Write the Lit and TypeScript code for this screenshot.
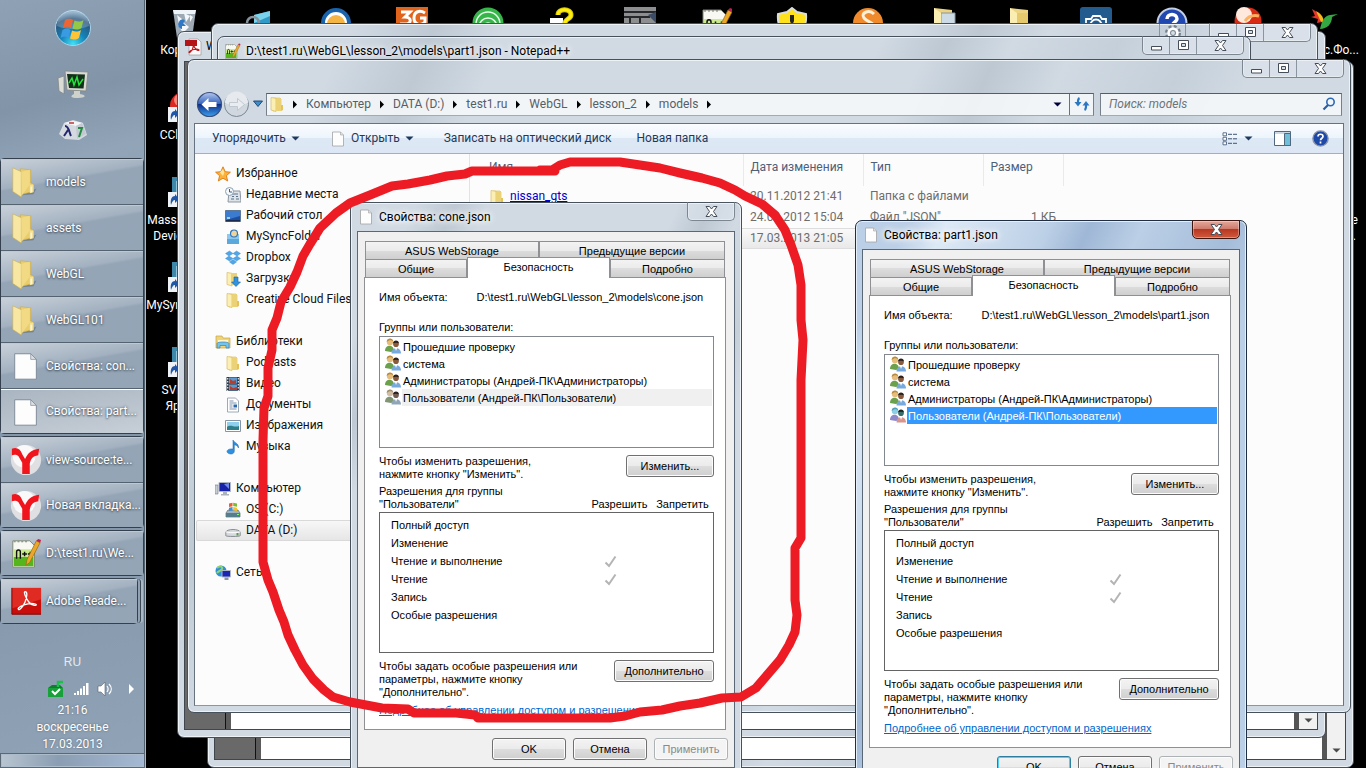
import { LitElement, html, css, svg, nothing, TemplateResult } from "lit";
import { customElement, property } from "lit/decorators.js";
import { classMap } from "lit/directives/class-map.js";

const base = css`
  * { box-sizing: border-box; }
  button, input { font: inherit; color: inherit; margin: 0; padding: 0; }
  button { background: none; border: 0; text-align: inherit; }
  a { color: inherit; text-decoration: none; }
  svg { display: block; flex: none; }
  h1, h2, p, ul, ol { margin: 0; padding: 0; font: inherit; list-style: none; }
`;

const shapes: Record<string, TemplateResult> = {
  folder: svg`<path d="M4 2h7l1 1v11l-8 1z" fill="#f3df8c" stroke="#d9b84d" stroke-width=".6"/><path d="M2 1.500l5 .8v13.200l-5-1.500z" fill="#fbefb4" stroke="#d3b44c" stroke-width=".6"/><path d="M7 3h5v12H7z" fill="#ecd276"/><path d="M12 9h2v5l-2 1z" fill="#e3c25a"/>`,
  bigFolder: svg`<path d="M12 31l13-1 3-6z" fill="#4c5a69" opacity=".45"/><path d="M11 3l11 1v14l3 1v8l-12 3z" fill="#e9cd6d" stroke="#c9a73d" stroke-width=".6"/><path d="M3 2l9 4v27l-9-6z" fill="#f7e7a3" stroke="#cfae4a" stroke-width=".6"/><path d="M12 6l9-2v16l-9 12z" fill="#f1da83"/><path d="M21 20h4v8l-4 1z" fill="#f3e29b"/><path d="M22.500 22v6" stroke="#fff"/>`,
  page: svg`<path d="M2.500 1h8l3 3v11h-11z" fill="#fdfdfd" stroke="#a2a2a2" stroke-width=".8"/><path d="M10.500 1v3h3" fill="#ddd" stroke="#a2a2a2" stroke-width=".6"/>`,
  bigPage: svg`<path d="M5 4h17l6 6v21H5z" fill="#fdfdfd" stroke="#7c8896"/><path d="M22 4v6h6z" fill="#dcdfe3" stroke="#7c8896" stroke-width=".7"/>`,
  yandex: svg`<circle cx="17" cy="17" r="16" fill="#e0e0e3"/><circle cx="15" cy="13" r="12" fill="#fff" opacity=".8"/><path d="M2 5c5-2 9 0 11 6l3 5c3-6 6-10 15-11l-1 7c-6 1-8 4-9 9v11h-8V20L9 13c-2-2-5-2-7-1z" fill="#f0151c"/>`,
  npp: svg`<path d="M3 3h18l5 5v23H3z" fill="#f8f9f2" stroke="#7b8471"/><path d="M4 20h21v10H4z" fill="#55b61b"/><path d="M4 12h21v8H4z" fill="#c9ea8f"/><path d="M4 4h2M8 4h2M12 4h2M16 4h2" stroke="#777"/><path d="M7 22v-7c0-3 4-3 4 0v7M13 17h5M15.500 14.500v5M19 17h5M21.500 14.500v5" fill="none" stroke="#111" stroke-width="1.500"/><path d="M28 3l4 2-11 21-4 3 1-6z" fill="#eaa72a" stroke="#9a6511" stroke-width=".7"/><path d="M28 3l4 2 1-3-3-1z" fill="#b25"/>`,
  adobe: svg`<path d="M2 2h31v28H2z" fill="#c90d0b"/><path d="M2 2h31v12L2 24z" fill="#e02b22"/><path d="M2 2v28h31" fill="none" stroke="#7c0504"/><path d="M16 6c3 0 2 6 0 11-2 5-6 9-7 8-2-2 5-5 10-6s9 0 9 1-5 1-8-3-6-11-4-11z" fill="none" stroke="#fff" stroke-width="1.400"/>`,
  pdf: svg`<path d="M5 1h9l3 3v13H5z" fill="#fafafa" stroke="#999" stroke-width=".7"/><path d="M1 2h12v6H1z" fill="#b31417"/><path d="M9 6c1 0 0 4-1 6-2 3-3 3-3 2 1-2 8-4 10-2 0 1-3 0-4-2S8 6 9 6z" fill="none" stroke="#c01519" stroke-width="1.200"/>`,
  star: svg`<path d="M8 .8l2.200 4.900 5.200.5-4 3.500 1.300 5.300L8 12.200 3.300 15l1.300-5.300-4-3.500 5.200-.5z" fill="#fbb13a" stroke="#d97b16" stroke-width=".9"/><path d="M8 3l1.300 3.500L8 10 5 6.500z" fill="#ffe49a"/>`,
  recent: svg`<path d="M4 4h11l1 11H3z" fill="#dde3e8" stroke="#8b97a3"/><path d="M7 7h6M7 9.500h2M11 9.500h2M6 12h3M11 12h3" stroke="#5b7288"/><circle cx="4.500" cy="4.500" r="4" fill="#f7f9fb" stroke="#8aa0b4"/><path d="M4.500 2v3H7" stroke="#35618b" fill="none"/>`,
  desktop: svg`<path d="M.5 2.500h15v11H.5z" fill="#1c4fa3" stroke="#5d7897"/><path d="M1 3h14v5L1 12z" fill="#3b7bd0"/><path d="M1 12h14v1.500H1z" fill="#1b2c4a"/><path d="M2 9h3v2H2z" fill="#9fd3f5"/>`,
  sync: svg`<path d="M2 5h12v10H2z" fill="#5aa8dc"/><path d="M2 5h12v5H2z" fill="#8cc8ee"/><circle cx="9" cy="4.500" r="3.500" fill="#f0d49a" stroke="#2e77bd" stroke-width="1.200"/>`,
  dropbox: svg`<path d="M4.500 1L8 3.500 4 6 .5 3.500zM11.500 1L8 3.500 12 6l3.500-2.500zM.5 8.500L4 6l4 2.500L4.500 11zM15.500 8.500L12 6 8 8.500l3.500 2.500zM4.500 12L8 9.500l3.500 2.500L8 14.500z" fill="#4ea7ea" stroke="#3b86c4" stroke-width=".4"/>`,
  download: svg`<path d="M2 1.500l5 .8V15l-5-1.500z" fill="#fbefb4" stroke="#d3b44c" stroke-width=".6"/><path d="M6 2h6v12H6z" fill="#ecd276"/><path d="M9 6h4v5h2.500L11 15.500 6.500 11H9z" fill="#2f93de" stroke="#1a62a8" stroke-width=".6"/>`,
  library: svg`<path d="M1 2h6l1 2h7v10H1z" fill="#efd47a" stroke="#c6a343" stroke-width=".7"/><path d="M3 6h10v3H3z" fill="#fff6cf"/><path d="M2 14V9.500c0-2 12-2 12 0V14h-3v-2.500H5V14z" fill="#73c4ea" stroke="#3a83b4" stroke-width=".7"/>`,
  video: svg`<path d="M1.500 1h13v14h-13z" fill="#2c3a48"/><path d="M4 1.500h8v6H4zM4 8.500h8v6H4z" fill="#5b9ad0"/><path d="M5 3l3 2 3-1v3H5zM5 10l3 2 4-1v3H5z" fill="#b33e2f"/><path d="M2.700 2v13M13.300 2v13" stroke="#e8edf2" stroke-width="1.200" stroke-dasharray="1.500 1.500"/>`,
  doc: svg`<path d="M2.500 1h8l3 3v11h-11z" fill="#fff" stroke="#8595a5" stroke-width=".8"/><path d="M4.500 4h4M4.500 6h7M4.500 8h3M4.500 10h3M4.500 12h7" stroke="#7c93aa"/><path d="M8.500 7.500h3.500v3H8.500z" fill="#2d68a8"/>`,
  image: svg`<path d="M.5 2.500h15v11H.5z" fill="#fff" stroke="#8595a5"/><path d="M2 4h12v8H2z" fill="#8fd0ee"/><path d="M2 9c4-3 7 1 12-1v4H2z" fill="#2f7f8a"/>`,
  music: svg`<path d="M8 1c1 3 6 3 5.500 8-1-2.500-3-3-4.200-3.200V12c0 2-1.500 3-3.300 3S2 14 2 12.500 4 9.500 8 10z" fill="#2f8fe0" stroke="#1560a8" stroke-width=".5"/>`,
  computer: svg`<path d="M0 4h3v9H0z" fill="#c6cdd4" stroke="#6f7a85" stroke-width=".6"/><path d="M4 1.500h11.500v9H4z" fill="#1722a8" stroke="#b0b8c1"/><path d="M9 3l5-1v6z" fill="#6f86ea"/><path d="M8 11h4v2h2v1.500H6V13h2z" fill="#aab3bc"/>`,
  osdrive: svg`<path d="M1 11l2-3h10l2 3v4H1z" fill="#9fb4c0" stroke="#5d6c76" stroke-width=".7"/><path d="M1 11h14v4H1z" fill="#557d8c"/><path d="M12 12.500h2" stroke="#7dff6a"/><path d="M4 1.500l3.500-.7v3.500L4 5z" fill="#e9602c"/><path d="M8.200.7L12 1.500v3.300L8.200 4z" fill="#7dba38"/><path d="M4 5.700l3.500-.7v3.500L4 9z" fill="#3b8fd6"/><path d="M8.200 5l3.800.7V9l-3.800-.7z" fill="#f6c22f"/>`,
  drive: svg`<path d="M.8 9.500c0-4 14.400-4 14.400 0v3.200c0 1-14.400 1-14.400 0z" fill="#d7dadd" stroke="#6f777e" stroke-width=".8"/><path d="M1 8.800c2 1.200 12 1.200 14 0" stroke="#fff" fill="none"/><path d="M11.500 10v2.500h2V10z" fill="#5a9a4b"/>`,
  network: svg`<circle cx="6" cy="6" r="5.500" fill="#2e8fd8"/><path d="M2 3c3-3 6-1 5 1S3 6 2 8M8 8c2-1 3 0 2 2" stroke="#8fd46e" stroke-width="2" fill="none"/><path d="M7 5.500h8.500v6.500H7z" fill="#1a27b5" stroke="#aeb8c4"/><path d="M9.500 12.500h4v2.500h-4z" fill="#8d98a5"/>`,
  users: svg`<circle cx="5" cy="4" r="3.200" fill="#e6bd7d"/><path d="M1.800 4C1 0 8 -1 8.200 3.500 6 1.500 4 2 1.800 4z" fill="#b88c3e"/><path d="M0 13c0-7 9-7 9 0l-3 1z" fill="#6ba04d"/><circle cx="11" cy="6.200" r="2.800" fill="#8a5a3c"/><path d="M8 5.500c0-4 6-4 6 0-2-1-4-1-6 0z" fill="#2c2019"/><path d="M6.500 15.500c0-7 9.500-7 9.500 0z" fill="#78a9dc"/><path d="M10 10l1 3 1.200-3z" fill="#fff"/>`,
  bin: svg`<path d="M5 3h23l-4 28H9z" fill="#b9c7d4" opacity=".85"/><path d="M5 3h23l-1 4H6z" fill="#eef3f7"/><path d="M9 8l5 4-3 5zM16 6l6 3-4 6zM22 8l3 2-3 5zM10 18l6-2 5 4-6 6z" fill="#f4f8fb"/><path d="M11 15c1-3 5-3 6-1l-2 2 3 3h-4v3c-3 0-5-4-3-7z" fill="#2f78c8"/>`,
  monitor: svg`<path d="M10 8l16-4v18L10 24z" fill="#2f9ac7"/><path d="M10 8l16-4v5l-16 7z" fill="#79d3ec"/><circle cx="9" cy="16" r="6" fill="none" stroke="#88929c" stroke-width="2.500"/>`,
  ring: svg`<circle cx="16" cy="16" r="13" fill="#fff" stroke="#1a63ad" stroke-width="4"/><circle cx="16" cy="17" r="9" fill="#f4b544"/><path d="M2 14l-2 4h6z" fill="#1a63ad"/>`,
  three: svg`<path d="M0 0h32v32H0z" fill="#e0641c"/><path d="M5 5h9l-5 5c7 0 7 7 0 7H4M29 6c-5-3-11-2-11 5s7 8 11 4v-4h-5" fill="none" stroke="#fff" stroke-width="3"/>`,
  wave: svg`<circle cx="16" cy="16" r="15.500" fill="#38b54a"/><path d="M7 20a9 9 0 0118 0M4 17a12 12 0 0124 0M11 21a5 5 0 0110 0" fill="none" stroke="#e4ffe8" stroke-width="1.500"/>`,
  question: svg`<path d="M2 11h13v8H2z" fill="#fff"/><path d="M10 8c0-7 13-7 13 0 0 4-6 4-6 8" fill="none" stroke="#d8c800" stroke-width="5"/><path d="M10 8c0-7 13-7 13 0 0 4-6 4-6 8" fill="none" stroke="#ffee11" stroke-width="3"/>`,
  photo: svg`<path d="M0 0h32v32H0z" fill="#8c8e90"/><path d="M0 5h32M0 10h26M6 10v10M16 10v10" stroke="#26282b" stroke-width="2"/><path d="M24 8l8 8V5z" fill="#3d4d66"/>`,
  shield: svg`<path d="M16 1l5 4 9 2c1 12-4 20-14 24C6 27 1 19 2 7l9-2z" fill="#ffe11c" stroke="#d9dde2" stroke-width="2"/><path d="M14 8h4v6l-2 5-2-5z" fill="#222"/>`,
  scratch: svg`<circle cx="16" cy="16" r="15" fill="#f08a2c"/><path d="M22 7c-5-5-14-1-10 4s12 4 8 10" fill="none" stroke="#fff1d8" stroke-width="3"/>`,
  deskFolder: svg`<path d="M6 1l18 2v22H6z" fill="#ecd482"/><path d="M6 1l7 5v25l-7-6z" fill="#fbeeb2"/><path d="M13 6h11v18H13z" fill="#e5c96c"/>`,
  docsFolder: svg`<path d="M6 1l18 2v22H6z" fill="#ecd482"/><path d="M13 6h14v18H13z" fill="#cddbe6" stroke="#8796a5"/><path d="M6 1l7 5v25l-7-6z" fill="#fbeeb2"/>`,
  camera: svg`<rect width="32" height="32" rx="3" fill="#245b8f"/><path d="M6 12h5l2-3h7l2 3h4v14H6z" fill="none" stroke="#fff" stroke-width="1.800"/><circle cx="16" cy="18" r="5.500" fill="none" stroke="#fff" stroke-width="2"/>`,
  help: svg`<circle cx="16" cy="16" r="14.500" fill="#2048b0" stroke="#c3cfe2" stroke-width="2"/><path d="M11 12c0-6 10-6 10 0 0 3-5 3-5 8M16 23v3" fill="none" stroke="#fff" stroke-width="3.500"/>`,
  ball: svg`<circle cx="16" cy="14" r="13.500" fill="#d92a14"/><circle cx="12" cy="8" r="8" fill="#ffe9dc"/><path d="M13 14c4-6 9-6 14-5" stroke="#ffb060" stroke-width="3" fill="none"/>`,
  bird: svg`<path d="M4 2c6 3 9 7 10 13l-5 1 1-4-7-2 4-1z" fill="#e8352b"/><path d="M8 4c6 3 8 7 8 14l-4-5z" fill="#f7b71d"/><path d="M12 22c2-8 4-13 10-14l8-1-6 3c0 7-5 12-12 12z" fill="#35a844"/>`,
  redball: svg`<circle cx="16" cy="14" r="14" fill="#dc2820"/><circle cx="12" cy="8" r="6" fill="#f4867c"/><path d="M0 15h12v15H0z" fill="#eef2f6"/><path d="M3 28c-1-6 1-9 4-9v-2l4 5-4 4v-3c-2 0-3 2-4 5z" fill="#1f56a8"/>`,
  shortcut: svg`<path d="M4 0h24v20H4z" fill="#3f87a8"/><path d="M8 4h18v12H8z" fill="#8fc4dc"/><path d="M0 15h12v15H0z" fill="#eef2f6"/><path d="M3 28c-1-6 1-9 4-9v-2l4 5-4 4v-3c-2 0-3 2-4 5z" fill="#1f56a8"/>`,
};

const icon = (name: string, size: number, box = size) =>
  html`<svg width=${size} height=${size} viewBox="0 0 ${box} ${box}" aria-hidden="true">${shapes[name]}</svg>`;

const arrow = (dir: "down" | "right", color: string) =>
  html`<svg width="9" height="9" viewBox="0 0 9 9" aria-hidden="true"><path d=${dir === "down" ? "M0.500 2.500h8l-4 4z" : "M3 0.500v8l4-4z"} fill=${color} /></svg>`;

const glyphMin = html`<svg width="13" height="13" viewBox="0 0 13 13"><path d="M1.500 7.500h10v3.500h-10z" fill="#fff" stroke="#454e58"/></svg>`;
const glyphMax = html`<svg width="13" height="13" viewBox="0 0 13 13"><path d="M1.500 1.500h10v9h-10z" fill="#fff" stroke="#454e58"/><path d="M4.500 4.500h4v3h-4z" fill="#d5dde5" stroke="#454e58"/></svg>`;
const glyphClose = html`<svg width="13" height="13" viewBox="0 0 13 13"><path d="M1 1.500h3.500l2 2.500 2-2.500H12L8.500 6.500 12 11.500H8.500l-2-2.500-2 2.500H1l3.500-5z" fill="#fff" stroke="#454e58"/></svg>`;

const captionCss = css`
  .caption { position: absolute; top: -1px; right: 6px; display: flex; height: 19px; border: 1px solid #7d8791; border-top-color: #4b5560; border-radius: 0 0 5px 5px; background: rgba(222, 229, 236, 0.6); overflow: hidden; box-shadow: inset 0 0 0 1px rgba(255, 255, 255, 0.35); }
  .caption button { display: grid; place-items: center; width: 27px; border-right: 1px solid #8b959f; }
  .caption .x { width: 46px; border-right: 0; }
  .glass { border: 1px solid #47515c; border-radius: 7px; box-shadow: inset 0 0 0 1px #edf2f6;
    background: linear-gradient(115deg, transparent 10%, rgba(150, 165, 180, .32) 16%, transparent 21%, transparent 50%, rgba(150, 165, 180, .34) 55%, transparent 60%, rgba(150, 165, 180, .2) 68%, transparent 73%), #d1dae3; }
`;

const caption = () => html`<div class="caption">
  <button aria-label="Свернуть">${glyphMin}</button>
  <button aria-label="Развернуть">${glyphMax}</button>
  <button class="x" aria-label="Закрыть">${glyphClose}</button>
</div>`;

@customElement("task-bar")
class TaskBar extends LitElement {
  static styles = [base, css`
    :host { display: flex; flex-direction: column; width: 146px; height: 100%; color: #fff; font-size: 12px; line-height: 17px;
      border-right: 1px solid #a9bacb; box-shadow: inset -1px 0 #52616f;
      background: linear-gradient(165deg, #8fa1b4 0, #8294a8 14%, #92a4b7 22%, #8294a7 60%, #90a3b7 100%); }
    .launch { display: flex; flex-direction: column; align-items: center; gap: 15px; padding-top: 9px; height: 158px; }
    .start { margin-bottom: 6px; }
    .groups { display: flex; flex-direction: column; gap: 2px; }
    .group { border: 1px solid #34404d; border-radius: 4px; margin-right: 1px; box-shadow: inset 0 0 0 1px #c0ccd8; }
    .stacked { width: 138px; box-shadow: inset 0 0 0 1px #c0ccd8, 3px 0 0 -1px #8fa1b3, 4px 0 0 -1px #3d4955, 6px 0 0 -1px #a9b8c7; }
    .task { display: flex; align-items: center; gap: 4px; width: 100%; height: 46px; padding: 0 4px 0 9px;
      border-bottom: 1px solid #55626f; border-top: 1px solid #bdc9d5; text-shadow: 0 0 3px #4b5967, 0 1px 2px #4b5967;
      background: linear-gradient(170deg, rgba(255,255,255,.5) 0, rgba(255,255,255,.16) 42%, rgba(255,255,255,.03) 46%), #91a2b4; }
    .task:last-child { border-bottom: 0; height: 44px; }
    .task.active { background: linear-gradient(170deg, #a9b5c1, #c7cfd7); border-color: #fff; }
    .task span { white-space: nowrap; }
    .tray { margin-top: auto; display: flex; flex-direction: column; align-items: center; }
    .lang { color: #e6ebef; font-family: "Liberation Sans", sans-serif; }
    .status { display: flex; align-items: center; gap: 8px; padding: 8px 0 4px 45px; height: 31px; }
    .clock { display: flex; flex-direction: column; align-items: center; text-shadow: 0 0 2px #55626f; }
    .show { width: 145px; height: 15px; border: 1px solid #5b6977; box-shadow: inset 0 0 0 1px #adbccb; background: linear-gradient(90deg, #b9c5d1, #8a9db2 40%, #a5b9d4); }
  `];
  private groups = [
    [["bigFolder", "models"], ["bigFolder", "assets"], ["bigFolder", "WebGL"], ["bigFolder", "WebGL101"], ["bigPage", "Свойства: con..."], ["bigPage", "Свойства: part..."]],
    [["yandex", "view-source:te..."], ["yandex", "Новая вкладка..."]],
    [["npp", "D:\\test1.ru\\We..."]],
    [["adobe", "Adobe Reade..."]],
  ];
  render() {
    return html`
      <div class="launch">
        <button class="start" aria-label="Пуск"><svg width="38" height="38" viewBox="0 0 38 38">
          <defs><radialGradient id="orb" cx=".5" cy=".95" r=".9"><stop offset="0" stop-color="#3fe0f5"/><stop offset=".4" stop-color="#1583b9"/><stop offset=".8" stop-color="#2a5479"/><stop offset="1" stop-color="#7ea3c2"/></radialGradient></defs>
          <circle cx="19" cy="19" r="17.500" fill="url(#orb)" stroke="#a9d3e8"/><path d="M3 17a16 16 0 0132 0c-8 4-24 4-32 0z" fill="#fff" opacity=".22"/>
          <path d="M11 11c3-2 6-1 8 0l-2 8c-2-1.500-5-2-8 0z" fill="#ef6433"/><path d="M20.500 11.500c3 1.500 6 1.500 9-.5l-2 8c-3 2-6 2-9 .5z" fill="#93c947"/>
          <path d="M8.500 21c3-2 6-1.500 8 0l-2 8c-2-1.500-5-2-8 0z" fill="#3a9be4"/><path d="M18 21.500c3 1.500 6 1.500 9-.5l-2 8c-3 2-6 2-9 .5z" fill="#fcc436"/></svg></button>
        <button aria-label="Диспетчер задач"><svg width="32" height="32" viewBox="0 0 32 32">
          <path d="M1 10l6-2v18l-5-3z" fill="#dcdcd6" stroke="#80837f" stroke-width=".7"/><path d="M8 3l23 1-2 19-19-1z" fill="#d9dad4" stroke="#85887f" stroke-width=".8"/>
          <path d="M10 6l18 .5-1.500 14L12 20z" fill="#12301a"/><path d="M12 15l3-5 2 7 3-8 2 8 4-6" fill="none" stroke="#25e33a" stroke-width="1.500"/><path d="M17 23h6v3c7 1 6 4-2 4s-8-2-4-4z" fill="#cfd1cb"/></svg></button>
        <button aria-label="Лямбда"><svg width="32" height="32" viewBox="0 0 32 32">
          <path d="M7 8l9-3 10 3 4 12-8 5-14-1-6-5z" fill="#d5dae0"/><path d="M7 8l9-2 10 2-7 3z" fill="#f3f5f7"/><path d="M19 11l1 13 9-5-4-11z" fill="#c2c9d1"/>
          <path d="M12 7h5v2h-5z" fill="#c66"/><path d="M8 11c4 0 4 6 6 10M11 15l-4 6" stroke="#23266e" stroke-width="2" fill="none"/><path d="M21 13h4l-3 9" stroke="#268a44" stroke-width="2" fill="none"/></svg></button>
      </div>
      <nav class="groups">
        ${this.groups.map((g, i) => html`<div class=${classMap({ group: true, stacked: i === 3 })}>
          ${g.map(([ic, label], j) => html`<button class=${classMap({ task: true, active: i === 0 && j === 5 })}>${icon(ic, 32, 34)}<span>${label}</span></button>`)}
        </div>`)}
      </nav>
      <div class="tray">
        <button class="lang">RU</button>
        <div class="status">
          <svg width="18" height="18" viewBox="0 0 18 18"><path d="M1 8h15v9H1z" fill="#18a03a"/><path d="M1 8l4-3h8l3 3z" fill="#0f7d2b"/><path d="M11 7V2h5" stroke="#1ac04a" stroke-width="2.500" fill="none"/><path d="M5 11l3 3 5-5" stroke="#fff" stroke-width="2" fill="none"/></svg>
          <svg width="16" height="16" viewBox="0 0 16 16"><path d="M1 12h2v2H1zM4 10h2v4H4zM7 7.500h2V14H7zM10 5h2v9h-2zM13 2h2.500v12H13z" fill="#fff"/></svg>
          <svg width="16" height="16" viewBox="0 0 16 16"><path d="M1 5h3l4-4v14l-4-4H1z" fill="#fff" stroke="#55626f" stroke-width=".6"/><path d="M10 5c1.500 2 1.500 4 0 6M12 3c3 3 3 7 0 10" stroke="#fff" fill="none" stroke-width="1.200"/></svg>
          <svg width="22" height="12" viewBox="4 0 22 12"><path d="M12 1v10l5-5z" fill="#fff"/></svg>
        </div>
        <div class="clock"><span>21:16</span><span>воскресенье</span><span>17.03.2013</span></div>
        <button class="show" aria-label="Свернуть все окна"></button>
      </div>`;
  }
}

@customElement("reader-window")
class ReaderWindow extends LitElement {
  static styles = [base, captionCss, css`
    :host { display: block; }
    .glass { position: relative; display: flex; flex-direction: column; height: 100%; padding: 0 7px 7px 6px; }
    .title { display: flex; align-items: center; gap: 4px; height: 29px; color: #000; font-size: 12px; }
    .body { flex: 1; display: flex; border: 1px solid #3f464d; background: #fff; }
    .side { width: 41px; background: #696969; border-right: 1px solid #111; }
    .split { width: 5px; background: #5b5b5b; }
    .doc { flex: 1; border-right: 5px solid #555; }
    .bar { width: 18px; display: flex; align-items: flex-end; justify-content: center; padding-bottom: 4px; background: #f1f1f1; }
  `];
  render() {
    return html`<section class="glass">
      <div class="title">${icon("pdf", 18)}<span>WebGL</span></div>
      <div class="body"><div class="side"></div><div class="split"></div><div class="doc"></div><div class="bar">${arrow("down", "#4a4a4a")}</div></div>
    </section>`;
  }
}

@customElement("title-window")
class TitleWindow extends LitElement {
  @property() heading = "";
  @property({ type: Boolean }) options = false;
  static styles = [base, captionCss, css`
    :host { display: block; }
    .glass { position: relative; height: 100%; padding: 4px 6px; }
    .title { display: flex; align-items: center; gap: 5px; height: 20px; font-size: 12px; text-shadow: 0 0 5px #fff, 0 0 9px #fff; }
    .opts { position: absolute; top: 0; right: 131px; width: 27px; display: grid; justify-content: center; border: solid #8b959f; border-width: 0 1px; }
  `];
  render() {
    return html`<section class="glass">
      ${this.heading ? html`<h2 class="title">${icon("npp", 17, 34)}<span>${this.heading}</span></h2>` : nothing}
      ${this.options ? html`<button class="opts" aria-label="Параметры"><svg width="18" height="18" viewBox="0 0 18 18"><circle cx="9" cy="9" r="6" fill="none" stroke="#77818b" stroke-width="4" stroke-dasharray="2.600 2.100"/><circle cx="9" cy="9" r="4.500" fill="#d5dde5" stroke="#fff" stroke-width="2.500"/><circle cx="9" cy="9" r="2.500" fill="none" stroke="#77818b"/></svg></button>` : nothing}
      ${caption()}
    </section>`;
  }
}

@customElement("explorer-window")
class ExplorerWindow extends LitElement {
  static styles = [base, captionCss, css`
    :host { display: block; font-size: 12px; line-height: 17px; }
    .glass { position: relative; display: flex; flex-direction: column; height: 100%; padding: 0 7px 6px; }
    .nav { display: flex; align-items: center; height: 63px; padding: 32px 1px 7px; }
    .travel { display: flex; align-items: center; width: 70px; }
    .travel .drop { padding-left: 3px; }
    .field { display: flex; align-items: center; height: 23px; border: 1px solid #76808b; border-top-color: #545d67; border-bottom-color: #a2abb5; background: rgba(248, 250, 252, .84); color: #565e68; }
    .address { flex: 1; margin-right: 6px; padding-left: 2px; }
    .address ol { display: flex; flex: 1; padding-left: 5px; gap: 7px; }
    .address li { display: flex; align-items: center; gap: 6px; }
    .address > button { display: grid; place-items: center; width: 24px; height: 21px; }
    .address .reload { border-left: 1px solid #69727c; }
    .search { width: 242px; padding: 0 5px 0 8px; }
    .search input { flex: 1; min-width: 0; border: 0; background: none; outline: 0; }
    .search input::placeholder { color: #6d737a; font-style: italic; opacity: 1; }
    .client { flex: 1; display: flex; flex-direction: column; border: 1px solid #66727f; border-bottom-color: #8b96a1; background: #fcfcfc; min-height: 0; margin: 0 -1px; }
    .tools { display: flex; align-items: center; height: 30px; padding: 0 14px 0 17px; color: #1e395b; border-bottom: 1px solid #a0afc3; background: linear-gradient(#fbfdff, #ecf4fc 48%, #dde8f5 50%, #dce6f4); }
    .tools button { display: flex; align-items: center; gap: 5px; }
    .open { margin: 0 30px; }
    .burn { margin-right: 25px; }
    .right { display: flex; align-items: center; gap: 21px; margin-left: auto; }
    .split { flex: 1; display: flex; }
    .tree { width: 275px; border-right: 1px solid #d9e5f3; padding-top: 9px; }
    .tree ul { margin-bottom: 21px; }
    .tree a { display: flex; align-items: center; gap: 5px; height: 21px; padding-left: 30px; color: #111; }
    .tree .root { padding-left: 20px; }
    .tree .sel { background: linear-gradient(#f8f8f8, #e5e5e5); box-shadow: inset 0 0 0 1px #d9d9d9; border-radius: 2px; margin-left: 1px; padding-left: 29px; }
    table { border-collapse: collapse; table-layout: fixed; width: 593px; align-self: flex-start; color: #6d6d6d; }
    th, td { padding: 0 0 0 7px; font-weight: 400; text-align: left; white-space: nowrap; }
    th { height: 32px; color: #4c607a; border-right: 1px solid #e3ebf4; padding-bottom: 6px; }
    th:nth-child(1), td:nth-child(1) { width: 273px; padding-left: 19px; }
    td:nth-child(1) { color: #00c; }
    th:nth-child(2), th:nth-child(3) { width: 120px; }
    th:nth-child(4) { width: 80px; }
    td:nth-child(4) { text-align: right; padding-right: 7px; }
    td { height: 21px; }
    td a { display: flex; align-items: center; gap: 5px; text-decoration: underline; }
    .current td { background: linear-gradient(#fafafa, #e8e8e8); box-shadow: inset 0 1px #ddd, inset 0 -1px #ddd; }
  `];
  private crumbs = ["Компьютер", "DATA (D:)", "test1.ru", "WebGL", "lesson_2", "models"];
  private tree: [string, string, [string, string][]][] = [
    ["star", "Избранное", [["recent", "Недавние места"], ["desktop", "Рабочий стол"], ["sync", "MySyncFolder"], ["dropbox", "Dropbox"], ["download", "Загрузки"], ["folder", "Creative Cloud Files"]]],
    ["library", "Библиотеки", [["folder", "Podcasts"], ["video", "Видео"], ["doc", "Документы"], ["image", "Изображения"], ["music", "Музыка"]]],
    ["computer", "Компьютер", [["osdrive", "OS (C:)"], ["drive", "DATA (D:)"]]],
    ["network", "Сеть", []],
  ];
  render() {
    return html`<section class="glass">
      ${caption()}
      <div class="nav">
        <div class="travel">
          <button aria-label="Назад"><svg width="27" height="27" viewBox="0 0 27 27">
            <defs><linearGradient id="bk" x2="0" y2="1"><stop offset="0" stop-color="#b5c8ee"/><stop offset=".48" stop-color="#3462bd"/><stop offset=".5" stop-color="#0d2f8c"/><stop offset="1" stop-color="#3aa0ee"/></linearGradient></defs>
            <circle cx="13.500" cy="13.500" r="12" fill="url(#bk)" stroke="#3a4f7c" stroke-width="1.200"/><path d="M5.500 13.500l7-6.500v4h8v5h-8v4z" fill="#fff"/></svg></button>
          <button aria-label="Вперед"><svg width="27" height="27" viewBox="0 0 27 27">
            <circle cx="13.500" cy="13.500" r="12" fill="#d0d7de" stroke="#7c8792"/><path d="M2 12a11.500 11.500 0 0123 0c-8 3-15 3-23 0z" fill="#e6eaee"/><path d="M21.500 13.500l-7-6v4h-8v4h8v4z" fill="#e9edf1" stroke="#b7c0c9" stroke-width=".8"/></svg></button>
          <button class="drop" aria-label="Последние страницы"><svg width="10" height="8" viewBox="0 0 10 8"><path d="M.5 1h9L5 6.500z" fill="#3f8ecb" stroke="#153f6b" stroke-width=".9"/></svg></button>
        </div>
        <div class="field address">
          ${icon("folder", 16)}
          <ol><li>${arrow("right", "#000")}</li>${this.crumbs.map((c) => html`<li><a href="#">${c}</a>${arrow("right", "#000")}</li>`)}</ol>
          <button aria-label="Журнал адресов">${arrow("down", "#00003c")}</button>
          <button class="reload" aria-label="Обновить"><svg width="16" height="16" viewBox="0 0 16 16"><path d="M5.500 2C3.500 3 4 5 4 8" stroke="#2a78c4" stroke-width="2.200" fill="none"/><path d="M.5 6h7L4 10.500z" fill="#2a78c4"/><path d="M10.500 14c2-1 1.500-3 1.500-6" stroke="#2a78c4" stroke-width="2.200" fill="none"/><path d="M8.500 9.500h7L12 5z" fill="#2a78c4"/></svg></button>
        </div>
        <div class="field search">
          <input aria-label="Поиск" placeholder="Поиск: models" />
          <svg width="14" height="14" viewBox="0 0 14 14"><circle cx="8.500" cy="5" r="3.700" fill="none" stroke="#2a69b5" stroke-width="1.600"/><path d="M6 8l-4.500 4.500" stroke="#2a5ca0" stroke-width="2.200"/></svg>
        </div>
      </div>
      <div class="client">
        <div class="tools">
          <button>Упорядочить ${arrow("down", "#1e395b")}</button>
          <button class="open">${icon("page", 16)}Открыть ${arrow("down", "#1e395b")}</button>
          <button class="burn">Записать на оптический диск</button>
          <button>Новая папка</button>
          <div class="right">
            <button aria-label="Вид"><svg width="17" height="14" viewBox="0 0 17 14"><path d="M1 .8h3.500v3H1zM1 5.300h3.500v3H1zM1 9.800h3.500v3H1z" fill="#fff" stroke="#4f6380" stroke-width=".9"/><path d="M6 2.300h10M6 6.800h10M6 11.300h10" stroke="#3f5572" stroke-dasharray="4 1"/></svg>${arrow("down", "#1e395b")}</button>
            <button aria-label="Область просмотра"><svg width="17" height="15" viewBox="0 0 17 15"><path d="M.5.5h16v14H.5z" fill="#fff" stroke="#51667f"/><path d="M1 1h15v2H1z" fill="#ccd8e4"/><path d="M10.500 2.500h6v12h-6z" fill="#6fbfd9" stroke="#51667f"/></svg></button>
            <button aria-label="Справка"><svg width="17" height="17" viewBox="0 0 17 17"><circle cx="8.500" cy="8.500" r="7.600" fill="#1e49a8" stroke="#8993a8" stroke-width="1.400"/><path d="M6 6.500c0-3 5-3 5 0 0 1.800-2.500 1.600-2.500 3.700M8.500 11.500v2" stroke="#fff" stroke-width="1.700" fill="none"/></svg></button>
          </div>
        </div>
        <div class="split">
          <nav class="tree">${this.tree.map(([ic, name, kids]) => html`<ul>
            <li><a class="root" href="#">${icon(ic, 16)}${name}</a></li>
            ${kids.map(([k, n]) => html`<li><a href="#" class=${classMap({ sel: n === "DATA (D:)" })}>${icon(k, 16)}${n}</a></li>`)}
          </ul>`)}</nav>
          <table>
            <thead><tr><th>Имя</th><th>Дата изменения</th><th>Тип</th><th>Размер</th></tr></thead>
            <tbody>
              <tr><td><a href="#">${icon("folder", 16)}nissan_gts</a></td><td>20.11.2012 21:41</td><td>Папка с файлами</td><td></td></tr>
              <tr><td></td><td>24.09.2012 15:04</td><td>Файл "JSON"</td><td>1 КБ</td></tr>
              <tr class="current"><td></td><td>17.03.2013 21:05</td><td></td><td></td></tr>
            </tbody>
          </table>
        </div>
      </div>
    </section>`;
  }
}

@customElement("properties-dialog")
class PropertiesDialog extends LitElement {
  @property() file = "";
  @property({ type: Boolean, reflect: true }) active = false;
  static styles = [base, captionCss, css`
    :host { display: block; font: 11px/13px "Liberation Sans", Arial, sans-serif; color: #000; }
    .glass { position: relative; padding: 0 6px 7px; }
    :host([active]) .glass { border-color: #1f2e42; box-shadow: inset 0 0 0 1px #e5effa;
      background: linear-gradient(115deg, transparent 8%, rgba(235, 244, 252, .7) 14%, transparent 30%, rgba(125, 155, 195, .45) 36%, transparent 44%, rgba(125, 155, 195, .35) 58%, transparent 66%), #bbcfe6; }
    .caption { right: 6px; }
    :host([active]) .caption { border-color: #3d1611; background: linear-gradient(#e2a99c, #d07b6b 46%, #b93722 50%, #cf5a3c); }
    .title { display: flex; align-items: center; gap: 5px; height: 28px; font: 12px/17px var(--ui); padding-left: 1px; text-shadow: 0 0 5px #fff, 0 0 8px #fff, 0 0 10px #fff; }
    .client { border: 1px solid #5a6774; background: #f0f0f0; padding: 9px 8px 7px 6px; }
    .tabs { display: grid; grid-template-columns: 102px 72px 71px 1fr; grid-template-rows: 18px 18px; margin: 0 1px; }
    .tabs button { border: 1px solid #8e9093; text-align: center; background: linear-gradient(#f3f3f3, #ebebeb 50%, #dddddd 50%, #cfcfcf); border-bottom: 0; padding-top: 2px; }
    .tabs .wide { grid-column: span 2; }
    .tabs .on { grid-column: span 2; background: #fff; margin: -2px 0 -1px; z-index: 1; padding: 0 0 1px; }
    .panel { background: #fff; border: 1px solid #8e9093; padding: 13px 11px 12px 14px; }
    .row { display: flex; justify-content: space-between; align-items: flex-start; }
    .object { gap: 29px; justify-content: flex-start; margin-bottom: 17px; }
    .list { height: 112px; margin-top: 2px; border: 1px solid #828790; padding: 1px; }
    .list li { display: flex; gap: 1px; height: 17px; padding-left: 4px; }
    .list span { flex: 1; padding: 3px 0 1px 1px; }
    .list .sel span { background: #f0f0f0; }
    :host([active]) .list .sel span { background: #3399ff; color: #fff; }
    .list .sel svg { filter: saturate(.4); }
    :host([active]) .list .sel svg { filter: hue-rotate(150deg) saturate(.8); }
    .btn { height: 22px; border: 1px solid #707070; border-radius: 3px; text-align: center; color: #000; box-shadow: inset 0 0 0 1px #fcfcfc; background: linear-gradient(#f3f3f3, #ebebeb 50%, #dddddd 50%, #cfcfcf); }
    .btn:disabled { color: #8a8a8a; border-color: #adb2b5; background: #f4f4f4; }
    .edit { margin: 7px 0 4px; }
    .edit .btn { width: 88px; }
    table, thead, tbody { display: block; }
    tr { display: grid; grid-template-columns: 1fr 63px 63px; align-items: end; }
    th { font-weight: 400; padding: 0; text-align: center; }
    th:first-child { text-align: left; }
    tbody { height: 141px; border: 1px solid #646464; margin-top: 1px; padding: 3px 0 0 11px; }
    tbody th, td { height: 18px; padding: 3px 0 0; }
    td svg { margin: 0 auto 0 17px; }
    .more { margin: 7px 0 5px; }
    .more .btn { width: 100px; }
    .link { color: #0066cc; text-decoration: underline; }
    .buttons { display: flex; justify-content: flex-end; gap: 7px; padding: 8px 0 0; margin-right: -2px; }
    .buttons .btn { width: 74px; }
    :host([active]) .ok { border-color: #2c7d9e; box-shadow: inset 0 0 0 1px #4fd0f4; }
  `];
  private groups = ["Прошедшие проверку", "система", "Администраторы (Андрей-ПК\\Администраторы)", "Пользователи (Андрей-ПК\\Пользователи)"];
  private rights: [string, boolean][] = [["Полный доступ", false], ["Изменение", false], ["Чтение и выполнение", true], ["Чтение", true], ["Запись", false], ["Особые разрешения", false]];
  render() {
    const tick = html`<svg width="13" height="13" viewBox="0 0 13 13" role="img" aria-label="Да"><path d="M1.500 7.500l3.500 3.500L11.500 1.500" fill="none" stroke="#b4b4b4" stroke-width="2"/></svg>`;
    return html`<section class="glass" role="dialog">
      <div class="caption"><button class="x" aria-label="Закрыть">${glyphClose}</button></div>
      <h2 class="title">${icon("page", 16)}<span>Свойства: ${this.file}</span></h2>
      <div class="client">
        <div class="tabs" role="tablist">
          <button role="tab" class="wide">ASUS WebStorage</button><button role="tab" class="wide">Предыдущие версии</button>
          <button role="tab">Общие</button><button role="tab" class="on" aria-selected="true">Безопасность</button><button role="tab">Подробно</button>
        </div>
        <div class="panel">
          <div class="row object"><span>Имя объекта:</span><span>D:\\test1.ru\\WebGL\\lesson_2\\models\\${this.file}</span></div>
          <p>Группы или пользователи:</p>
          <ul class="list">${this.groups.map((g, i) => html`<li class=${classMap({ sel: i === 3 })}>${icon("users", 16)}<span>${g}</span></li>`)}</ul>
          <div class="row edit"><p>Чтобы изменить разрешения,<br />нажмите кнопку "Изменить".</p><button class="btn">Изменить...</button></div>
          <table>
            <thead><tr><th>Разрешения для группы<br />"Пользователи"</th><th>Разрешить</th><th>Запретить</th></tr></thead>
            <tbody>${this.rights.map(([r, yes]) => html`<tr><th>${r}</th><td>${yes ? tick : nothing}</td><td></td></tr>`)}</tbody>
          </table>
          <div class="row more"><p>Чтобы задать особые разрешения или<br />параметры, нажмите кнопку<br />"Дополнительно".</p><button class="btn">Дополнительно</button></div>
          <a class="link" href="#">Подробнее об управлении доступом и разрешениях</a>
        </div>
        <div class="buttons"><button class="btn ok">OK</button><button class="btn">Отмена</button><button class="btn" disabled>Применить</button></div>
      </div>
    </section>`;
  }
}

@customElement("app-root")
class AppRoot extends LitElement {
  static styles = [base, css`
    :host { --ui: Roboto, "Open Sans", sans-serif; display: flex; height: 100vh; overflow: hidden; background: #000; font: 12px/17px var(--ui); }
    .desk { position: relative; flex: 1; overflow: hidden; }
    .shortcuts { display: grid; grid-template-columns: repeat(16, 76px); grid-auto-rows: 85px; padding-top: 7px; color: #fff; line-height: 16px; }
    .shortcuts a { display: flex; flex-direction: column; align-items: center; gap: 3px; text-align: center; white-space: pre; }
    .first { grid-column: 1; }
    .last { grid-column: 16; }
    .win { position: absolute; }
    .reader2 { left: 61px; top: 61px; width: 1147px; height: 707px; }
    .reader1 { left: 31px; top: 31px; width: 1149px; height: 707px; }
    .blank { left: 65px; top: 23px; width: 1107px; height: 640px; }
    .npp { left: 71px; top: 36px; width: 1034px; height: 640px; }
    .explorer { left: 41px; top: 59px; width: 1164px; height: 654px; }
    .cone { left: 204px; top: 202px; width: 392px; }
    .part { left: 709px; top: 220px; width: 392px; }
    .ink { position: absolute; left: 0; top: 0; pointer-events: none; }
  `];
  private top = ["bin", "monitor", "ring", "three", "wave", "question", "photo", "npp", "shield", "scratch", "docsFolder", "deskFolder", "camera", "help", "ball", "bird"];
  private rows: [string, string, string, string][] = [
    ["redball", "CCleaner", "ball", " "],
    ["shortcut", "Mass Storage\nDevice Tool", "shortcut", "Управление\nфайлами ..."],
    ["shortcut", "MySyncFolder", "shortcut", " "],
    ["shortcut", "SVRTool\nЯрлык", "shortcut", " "],
  ];
  render() {
    return html`
      <task-bar></task-bar>
      <main class="desk">
        <div class="shortcuts">
          ${this.top.map((n, i) => html`<a href="#">${icon(n, 32)}${i === 0 ? "Корзина" : i === 15 ? "Яндекс.Фо..." : nothing}</a>`)}
          ${this.rows.map(([a, la, b, lb]) => html`<a class="first" href="#">${icon(a, 32)}${la}</a><a class="last" href="#">${lb === " " ? nothing : icon(b, 32)}${lb}</a>`)}
        </div>
        <reader-window class="win reader2"></reader-window>
        <reader-window class="win reader1"></reader-window>
        <title-window class="win blank" options></title-window>
        <title-window class="win npp" heading="D:\\test1.ru\\WebGL\\lesson_2\\models\\part1.json - Notepad++"></title-window>
        <explorer-window class="win explorer"></explorer-window>
        <properties-dialog class="win cone" file="cone.json"></properties-dialog>
        <properties-dialog class="win part" file="part1.json" active></properties-dialog>
        <svg class="ink" width="700" height="768" viewBox="146 0 700 768" aria-hidden="true">
          <path fill="none" stroke="#ed1c24" stroke-width="9" stroke-linecap="round" stroke-linejoin="round"
            d="M555 171H472L465 174L447 176L430 180L408 184L392 186L370 195L350 203L336 213L320 228L310 244L303 256L297 272L290 287L281 302L277 318L272 330L272 350L268 368V396L264 408L263 440V562L268 580L273 592L279 610L284 622L288 635L295 650L303 665L313 679L324 690L333 697L350 702L366 705L382 708L408 709L414 713L450 713L456 713L475 715L478 718H610L625 716L640 712L662 710L680 706L700 703L722 698L741 697L756 688L768 674L780 660L789 645L795 632L797 615L795 600V548L801 538V380L803 340L801 320V285L798 265L791 245L785 230L775 215L762 204L745 196L735 190L720 183L702 178L680 173L660 168L640 165L620 162H570L560 165L552 170H540"/>
        </svg>
      </main>`;
  }
}
